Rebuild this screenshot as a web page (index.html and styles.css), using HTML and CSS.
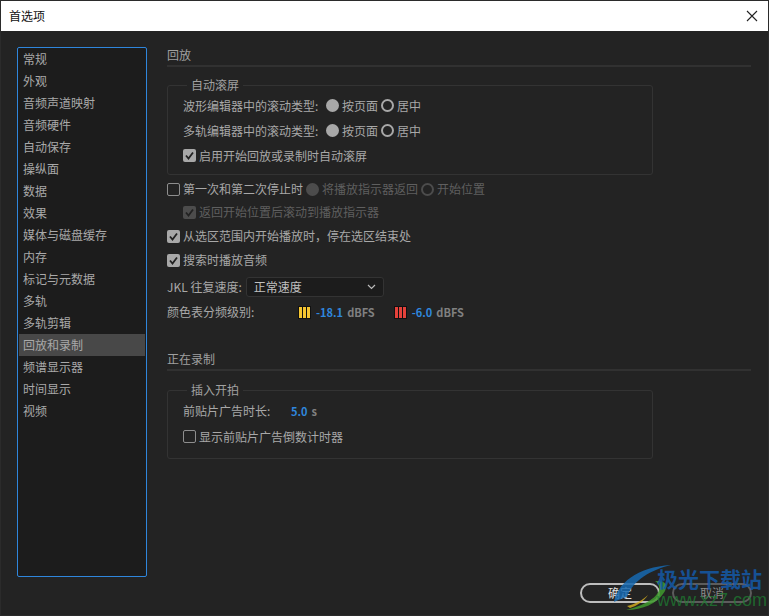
FILE: index.html
```html
<!DOCTYPE html>
<html lang="zh-CN">
<head>
    <meta charset="UTF-8">
    <title>首选项</title>
    <link rel="stylesheet" href="styles.css">
</head>
<body>
    <div class="window">
        <div class="titlebar">
            <span>首选项</span>
            <svg class="close" width="12" height="12" viewBox="0 0 12 12"><path d="M1 1L11 11M11 1L1 11" stroke="#222" stroke-width="1.1" fill="none"/></svg>
        </div>

        <div class="content">
            <ul class="side-list">
                <li>常规</li>
                <li>外观</li>
                <li>音频声道映射</li>
                <li>音频硬件</li>
                <li>自动保存</li>
                <li>操纵面</li>
                <li>数据</li>
                <li>效果</li>
                <li>媒体与磁盘缓存</li>
                <li>内存</li>
                <li>标记与元数据</li>
                <li>多轨</li>
                <li>多轨剪辑</li>
                <li class="selected">回放和录制</li>
                <li>频谱显示器</li>
                <li>时间显示</li>
                <li>视频</li>
            </ul>

            <div class="panel">
                <h2 class="section-title">回放</h2>

                <fieldset class="group group-scroll">
                    <legend>自动滚屏</legend>
                    <div class="row row-scroll">
                        <span class="row-label">波形编辑器中的滚动类型:</span>
                        <span class="radio filled"></span><span>按页面</span>
                        <span class="radio"></span><span>居中</span>
                    </div>
                    <div class="row row-scroll">
                        <span class="row-label">多轨编辑器中的滚动类型:</span>
                        <span class="radio filled"></span><span>按页面</span>
                        <span class="radio"></span><span>居中</span>
                    </div>
                    <div class="row row-scroll">
                        <span class="check checked"><svg width="13" height="13" viewBox="0 0 13 13"><path d="M3 6.5L5.5 9.5L10 3.5" stroke="#222" stroke-width="1.8" fill="none"/></svg></span>
                        <span>启用开始回放或录制时自动滚屏</span>
                    </div>
                </fieldset>

                <div class="row row-stop">
                    <span class="check"></span>
                    <span>第一次和第二次停止时</span>
                    <span class="radio filled dim"></span><span class="dim-text">将播放指示器返回</span>
                    <span class="radio dim"></span><span class="dim-text">开始位置</span>
                </div>
                <div class="row row-return">
                    <span class="check checked dim"><svg width="13" height="13" viewBox="0 0 13 13"><path d="M3 6.5L5.5 9.5L10 3.5" stroke="#222" stroke-width="1.8" fill="none"/></svg></span>
                    <span class="dim-text">返回开始位置后滚动到播放指示器</span>
                </div>
                <div class="row row-plain">
                    <span class="check checked"><svg width="13" height="13" viewBox="0 0 13 13"><path d="M3 6.5L5.5 9.5L10 3.5" stroke="#222" stroke-width="1.8" fill="none"/></svg></span>
                    <span>从选区范围内开始播放时，停在选区结束处</span>
                </div>
                <div class="row row-plain">
                    <span class="check checked"><svg width="13" height="13" viewBox="0 0 13 13"><path d="M3 6.5L5.5 9.5L10 3.5" stroke="#222" stroke-width="1.8" fill="none"/></svg></span>
                    <span>搜索时播放音频</span>
                </div>
                <div class="row row-jkl">
                    <span>JKL 往复速度:</span>
                    <div class="select">
                        <span>正常速度</span>
                        <svg width="9" height="6" viewBox="0 0 9 6"><path d="M1 1L4.500 4.500L8 1" stroke="#bbb" stroke-width="1.2" fill="none"/></svg>
                    </div>
                </div>
                <div class="row row-meter">
                    <span class="meter-label">颜色表分频级别:</span>
                    <span class="swatch yellow"><i></i><i></i><i></i></span>
                    <span class="value">-18.1</span><span class="unit">dBFS</span>
                    <span class="swatch red"><i></i><i></i><i></i></span>
                    <span class="value">-6.0</span><span class="unit">dBFS</span>
                </div>

                <h2 class="section-title section-record">正在录制</h2>

                <fieldset class="group group-preroll">
                    <legend>插入开拍</legend>
                    <div class="row row-duration">
                        <span class="duration-label">前贴片广告时长:</span>
                        <span class="value">5.0</span><span class="unit">s</span>
                    </div>
                    <div class="row row-scroll">
                        <span class="check"></span>
                        <span>显示前贴片广告倒数计时器</span>
                    </div>
                </fieldset>
            </div>
        </div>

        <div class="footer">
            <button class="btn btn-ok">确定</button>
            <button class="btn btn-cancel">取消</button>
        </div>

        <!-- watermark over the footer -->
        <div class="watermark">
            <svg class="wm-logo" width="66" height="48" viewBox="0 0 66 48">
                <path d="M1 38C4 20 24 3 58 1C38 6 20 16 14 33C10 34 5 36 1 38Z" fill="#1668b0" opacity="0.85"/>
                <path d="M42 17C54 16 56 22 50 30C44 39 30 46 13 46C30 42 44 34 46 26C47 22 45 19 42 17Z" fill="#3f9a2e" opacity="0.85"/>
                <path d="M14 42C22 40 30 36 35 31C31 37 24 42 17 44Z" fill="#d9b21f" opacity="0.8"/>
            </svg>
            <div class="wm-text">
                <div class="wm-name">极光下载站</div>
                <div class="wm-url">www.xz7.com</div>
            </div>
        </div>
    </div>
</body>
</html>
```

FILE: styles.css
```css
/* Global styles */
* {
    box-sizing: border-box;
}
html, body {
    margin: 0;
    padding: 0;
}
body {
    width: 769px;
    height: 616px;
    overflow: hidden;
    font-family: "Noto Sans CJK SC", "Liberation Sans", sans-serif;
    font-size: 12px;
    line-height: 16px;
    color: #a8a8a8;
    background: #232323;
}
.window {
    position: relative;
    width: 769px;
    height: 616px;
    display: flex;
    flex-direction: column;
    border: 1px solid #2b2b2b;
}
/* Title bar */
.titlebar {
    height: 30px;
    flex: none;
    display: flex;
    align-items: center;
    justify-content: space-between;
    padding: 0 10px 0 8px;
    background: #fff;
    color: #111;
}
/* Main area */
.content {
    flex: 1;
    display: flex;
    align-items: flex-start;
    padding: 16px 17px 0 16px;
}
.side-list {
    width: 130px;
    height: 530px;
    flex: none;
    margin: 0 20px 0 0;
    padding: 0 1px;
    list-style: none;
    background: #1c1c1c;
    border: 1px solid #2f86dc;
    border-radius: 2px;
}
.side-list li {
    height: 22px;
    padding-left: 4px;
    line-height: 22px;
    color: #a9a9a9;
}
.side-list li.selected {
    background: #484848;
}
.panel {
    flex: 1;
    min-width: 0;
}
/* Sections */
.section-title {
    margin: 0;
    height: 20px;
    font-size: 12px;
    font-weight: normal;
    line-height: 16px;
    padding-top: 0;
    color: #a0a0a0;
    border-bottom: 2px solid #313131;
}
.group {
    width: 486px;
    margin: 0;
    padding: 0 0 0 15px;
    border: 1px solid #333;
    border-radius: 3px;
}
.group legend {
    margin-left: 4px;
    padding: 0 4px 0 4px;
    line-height: 16px;
    color: #a0a0a0;
}
.group-scroll {
    height: 98px;
    margin-top: 10px;
}
.group-preroll {
    height: 77px;
    margin-top: 11px;
}
/* Rows */
.row {
    display: flex;
    align-items: center;
}
.row-scroll {
    height: 25px;
}
.row-stop {
    height: 22px;
    margin-top: 3px;
}
.row-return {
    height: 24px;
    padding-left: 16px;
}
.row-plain {
    height: 24px;
}
.row-jkl {
    height: 28px;
    margin-top: 1px;
}
.row-meter {
    height: 22px;
}
.row-duration {
    height: 26px;
}
.row-label {
    width: 140px;
}
.duration-label {
    width: 103px;
}
.meter-label {
    width: 131px;
}
.section-record {
    margin-top: 28px;
}
.dim-text {
    color: #5f5f5f;
}
/* Radio and checkbox */
.radio {
    width: 13px;
    height: 13px;
    flex: none;
    margin: 0 3px 0 3px;
    border: 2px solid #a8a8a8;
    border-radius: 50%;
}
.radio.filled {
    background: #a8a8a8;
}
.radio.dim {
    border-color: #4c4c4c;
}
.radio.filled.dim {
    background: #4c4c4c;
}
.check {
    width: 13px;
    height: 13px;
    flex: none;
    margin-right: 3px;
    display: flex;
    border: 1.5px solid #8e8e8e;
    border-radius: 2px;
}
.check.checked {
    border: none;
    background: #a8a8a8;
}
.check.checked.dim {
    background: #4c4c4c;
}
/* Select */
.select {
    width: 138px;
    height: 20px;
    margin-left: 4px;
    padding: 0 7px;
    display: flex;
    align-items: center;
    justify-content: space-between;
    background: #1c1c1c;
    border: 1px solid #333;
    border-radius: 3px;
    color: #c0c0c0;
}
/* Meter swatches */
.swatch {
    width: 13px;
    height: 13px;
    flex: none;
    display: flex;
    gap: 1px;
    padding: 1px;
    background: #111;
}
.swatch i {
    flex: 1;
}
.swatch.yellow i {
    background: #f5c531;
}
.swatch.red i {
    background: #e5423b;
}
.swatch.red {
    margin-left: 19px;
}
.value {
    margin-left: 5px;
    color: #2f86dc;
    font-weight: bold;
    font-size: 11px;
}
.unit {
    margin-left: 4px;
    color: #808080;
    font-size: 11px;
    font-weight: bold;
}
/* Footer */
.footer {
    position: absolute;
    right: 16px;
    bottom: 12px;
    display: flex;
    gap: 12px;
}
.btn {
    width: 80px;
    height: 20px;
    padding: 0;
    font: inherit;
    line-height: 16px;
    background: transparent;
    border: 2px solid #bdbdbd;
    border-radius: 10px;
    color: #e0e0e0;
}
.btn-cancel {
    border-color: #5c5c5c;
    color: #8a8a8a;
}
/* Watermark */
.watermark {
    position: absolute;
    left: 612px;
    top: 564px;
    display: flex;
    pointer-events: none;
}
.wm-logo {
    margin-top: -1px;
}
.wm-text {
    margin-left: -22px;
    margin-top: 1px;
}
.wm-name {
    font-size: 21px;
    line-height: 24px;
    font-weight: bold;
    color: rgba(20, 90, 170, 0.85);
}
.wm-url {
    font-family: "Liberation Sans", sans-serif;
    font-size: 18px;
    line-height: 20px;
    color: rgba(30, 125, 50, 0.75);
}
```
